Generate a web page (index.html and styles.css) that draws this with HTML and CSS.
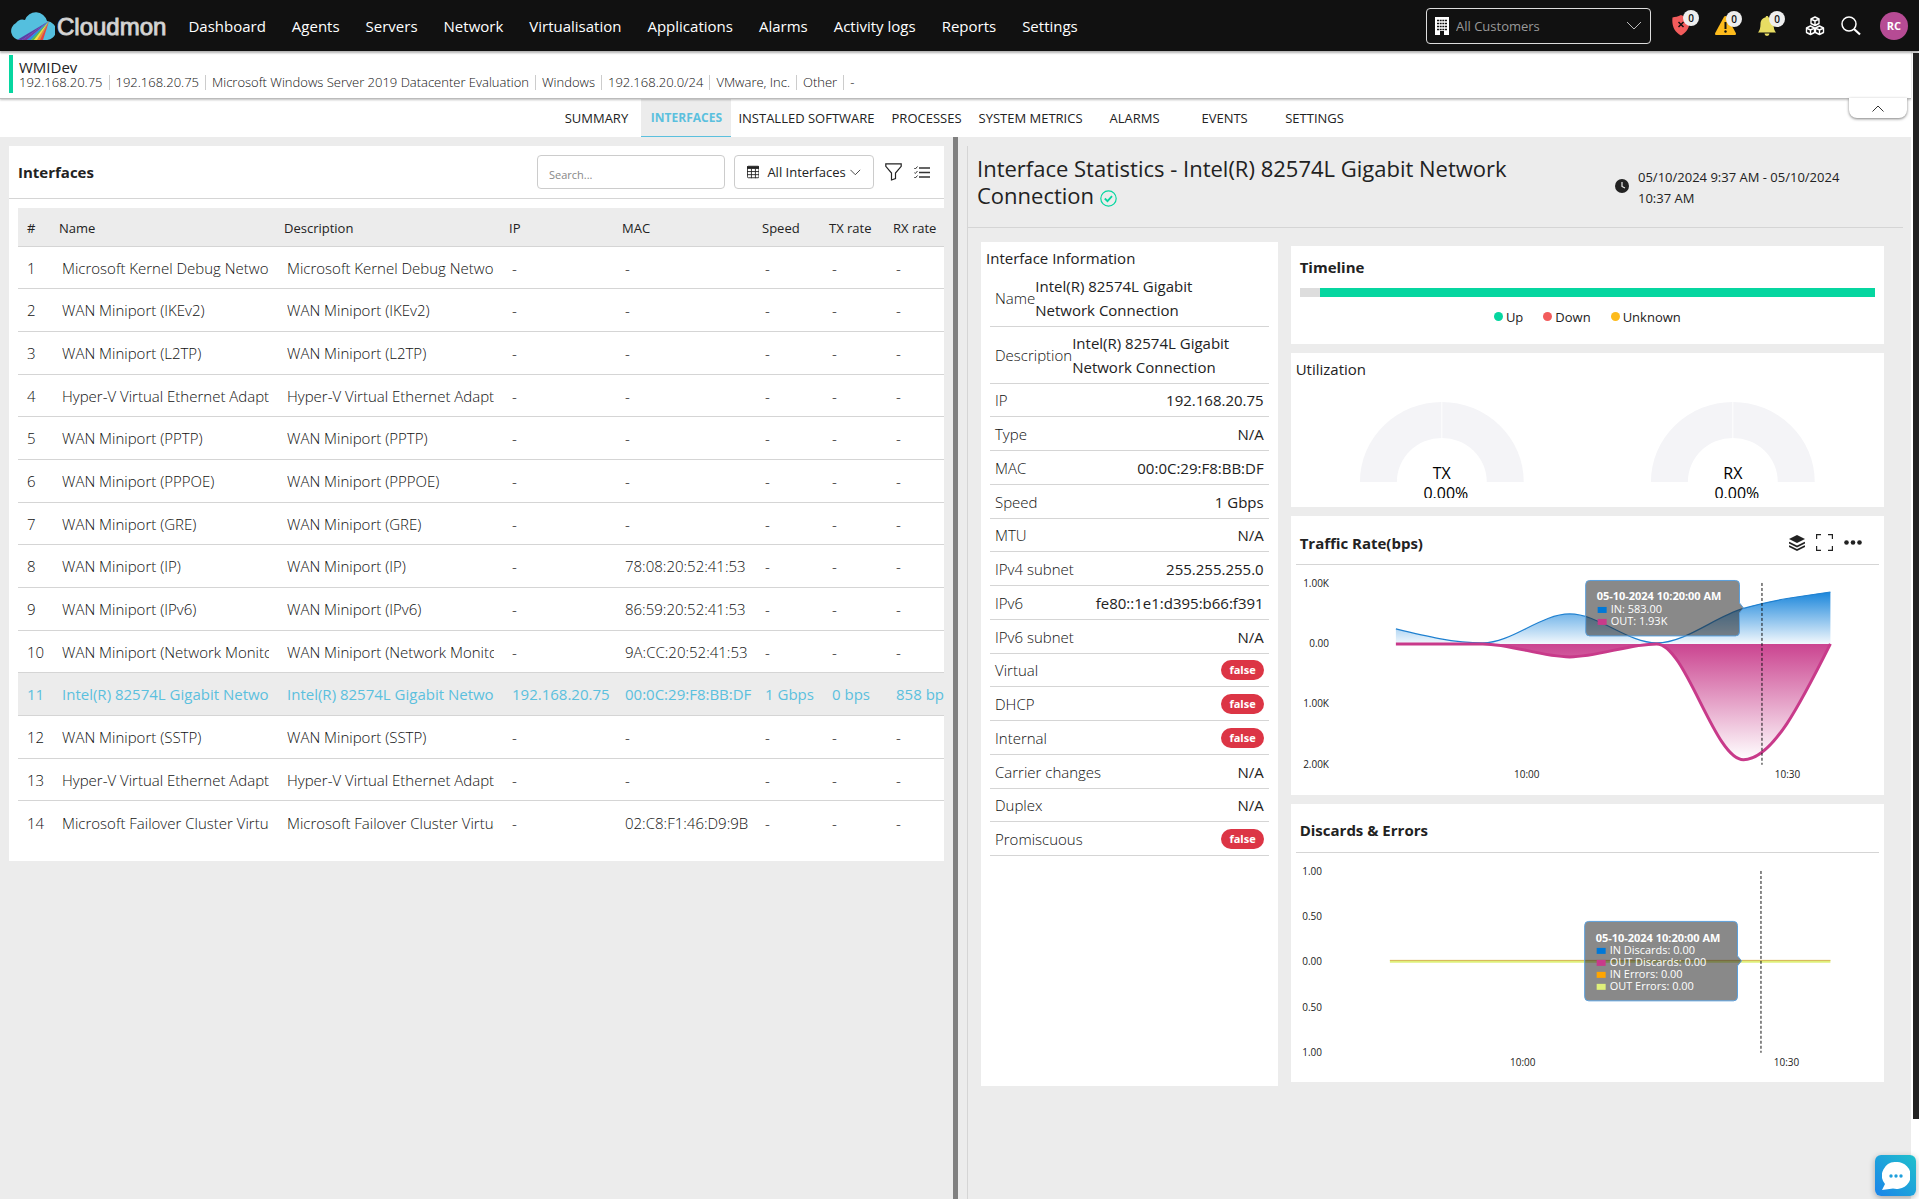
FILE: index.html
```html
<!DOCTYPE html>
<html lang="en">
<head>
<meta charset="UTF-8">
<meta name="viewport" content="width=device-width, initial-scale=1.0">
<title>Cloudmon - WMIDev</title>
<link rel="stylesheet" href="styles.css">
</head>
<body>

<header class="navbar">
    <a class="brand" href="#">
        <svg width="44" height="28" viewBox="0 0 44 28">
            <defs><clipPath id="cloud"><path d="M9 28a9 9 0 0 1-4-17 8 8 0 0 1 9-3A11.500 11.500 0 0 1 36 9a9.500 9.500 0 0 1-1 19z"/></clipPath></defs>
            <g clip-path="url(#cloud)">
                <rect width="44" height="28" fill="#54bfde"/>
                <path d="M38 9L6 28h5z" fill="#5b3fa8"/>
                <path d="M38 9L11 28h5z" fill="#7a3aa5"/>
                <path d="M38 9L16 28h4z" fill="#2d8fe0"/>
                <path d="M38 9L20 28h3z" fill="#5fb947"/>
                <path d="M38 9L23 28h3z" fill="#f7e23a"/>
                <path d="M38 9L26 28h3z" fill="#f58a2c"/>
                <path d="M38 9L29 28h3z" fill="#e8443c"/>
            </g>
        </svg>
        <span>Cloudmon</span>
    </a>
    <nav class="main-nav">
        <a href="#">Dashboard</a>
        <a href="#">Agents</a>
        <a href="#">Servers</a>
        <a href="#">Network</a>
        <a href="#">Virtualisation</a>
        <a href="#">Applications</a>
        <a href="#">Alarms</a>
        <a href="#">Activity logs</a>
        <a href="#">Reports</a>
        <a href="#">Settings</a>
    </nav>
    <div class="nav-right">
        <label class="customer">
            <svg width="14" height="18" viewBox="0 0 14 18"><path d="M0 0h14v18H9v-4H5v4H0z" fill="#fff"/><path d="M2 3.500h10M2 6.500h10M2 9.500h10M2 12.500h10" stroke="#111" stroke-width="1.500" stroke-dasharray="2 .67"/></svg>
            <select aria-label="Customer"><option>All Customers</option></select>
            <svg class="chevron" width="16" height="9" viewBox="0 0 16 9"><path d="M1 1l7 7 7-7" fill="none" stroke="#bbb"/></svg>
        </label>
        <button class="alert" aria-label="Critical">
            <svg width="18" height="21" viewBox="0 0 18 21"><path d="M9 0c3 1.500 6 2 8.500 2.500C18.500 11 15.500 17 9 20.500 2.500 17 -.5 11 .5 2.500 3 2 6 1.500 9 0z" fill="#f25c5c"/><path d="M6.500 7l5 5m0-5l-5 5" stroke="#111" stroke-width="1.500"/></svg>
            <span class="badge">0</span>
        </button>
        <button class="alert" aria-label="Warnings">
            <svg width="21" height="19" viewBox="0 0 21 19"><path d="M10.500 0c.7 0 1.200.4 1.600 1l8.700 16c.4 1 0 2-1 2H1.200c-1 0-1.400-1-1-2L8.900 1c.4-.6.9-1 1.600-1z" fill="#fdbb1c"/><path d="M10.500 6v7" stroke="#111" stroke-width="2"/><circle cx="10.500" cy="15.500" r="1.200" fill="#111"/></svg>
            <span class="badge">0</span>
        </button>
        <button class="alert" aria-label="Notifications">
            <svg width="18" height="20" viewBox="0 0 18 20"><path d="M9 0c.8 0 1.300.5 1.300 1.200C14 2 15.500 5 15.500 8c0 4 1 7 2.500 8.500H0C1.500 15 2.500 12 2.500 8c0-3 1.500-6 5.200-6.800C7.700.5 8.200 0 9 0zM6.500 17.500h5a2.500 2.500 0 0 1-5 0z" fill="#e8dd63"/></svg>
            <span class="badge">0</span>
        </button>
        <button class="nav-icon" aria-label="Modules">
            <svg width="20" height="20" viewBox="0 0 20 20" fill="none" stroke="#fff" stroke-width="1.400" stroke-linejoin="round"><path d="M10 1l4 2v4.500l-4 2-4-2V3zM6 3l4 2 4-2M10 5v4.500"/><path d="M5.500 10l4 2v4.500l-4 2-4-2V12zM1.500 12l4 2 4-2M5.500 14v4.500M14.500 10l4 2v4.500l-4 2-4-2V12zM10.500 12l4 2 4-2M14.500 14v4.500"/></svg>
        </button>
        <button class="nav-icon" aria-label="Search">
            <svg width="20" height="20" viewBox="0 0 20 20" fill="none" stroke="#fff"><circle cx="8" cy="8" r="7" stroke-width="1.500"/><path d="M13 13l6 5.500" stroke-width="2.200"/></svg>
        </button>
        <button class="avatar">RC</button>
    </div>
</header>

<div class="page">
    <div class="content">
        <section class="device">
            <h1>WMIDev</h1>
            <ul>
                <li>192.168.20.75</li>
                <li>192.168.20.75</li>
                <li>Microsoft Windows Server 2019 Datacenter Evaluation</li>
                <li>Windows</li>
                <li>192.168.20.0/24</li>
                <li>VMware, Inc.</li>
                <li>Other</li>
                <li>-</li>
            </ul>
            <button class="collapse" aria-label="Collapse"><svg width="12" height="7" viewBox="0 0 12 7"><path d="M.5 6.500L6 1l5.500 5.500" fill="none" stroke="#333"/></svg></button>
        </section>

        <nav class="tabs">
            <a href="#">SUMMARY</a>
            <a href="#" class="active">INTERFACES</a>
            <a href="#">INSTALLED SOFTWARE</a>
            <a href="#">PROCESSES</a>
            <a href="#">SYSTEM METRICS</a>
            <a href="#">ALARMS</a>
            <a href="#">EVENTS</a>
            <a href="#">SETTINGS</a>
        </nav>

        <main class="split">
            <section class="list-pane">
                <div class="list-card">
                    <div class="toolbar">
                        <h2>Interfaces</h2>
                        <input type="text" placeholder="Search..." aria-label="Search">
                        <label class="view-select">
                            <svg width="14" height="14" viewBox="0 0 14 14" fill="none" stroke="#222"><rect x=".5" y=".5" width="13" height="13" rx="1"/><path d="M0 2h14" stroke-width="3"/><path d="M0 6.500h14M0 10h14M5 3v11M9.500 3v11"/></svg>
                            <select aria-label="View"><option>All Interfaces</option></select>
                            <svg class="chevron" width="12" height="7" viewBox="0 0 12 7"><path d="M.5.5L6 6 11.500.5" fill="none" stroke="#333"/></svg>
                        </label>
                        <button class="tool" aria-label="Filter"><svg width="17" height="18" viewBox="0 0 17 18"><path d="M.8.800h15.400v2.500L10.500 10v5.500L6.500 17v-7L.8 3.300z" fill="none" stroke="#222" stroke-width="1.200"/></svg></button>
                        <button class="tool" aria-label="Columns"><svg width="16" height="13" viewBox="0 0 16 13" fill="none" stroke="#333" stroke-width="1.300"><path d="M5 2h11M5 6.500h11M5 11h11"/><path d="M.3 2l1 1L3.500.500M.3 6.500l1 1 2.200-2.500M.3 11l1 1 2.200-2.500" stroke-width="1"/></svg></button>
                    </div>
                    <div class="table-wrap">
                        <table>
                            <colgroup><col class="c-num"><col class="c-name"><col class="c-name"><col class="c-ip"><col class="c-mac"><col class="c-speed"><col class="c-tx"><col class="c-rx"></colgroup>
                            <thead>
                                <tr><th>#</th><th>Name</th><th>Description</th><th>IP</th><th>MAC</th><th>Speed</th><th>TX rate</th><th>RX rate</th></tr>
                            </thead>
                            <tbody>
                                <tr><td>1</td><td><div>Microsoft Kernel Debug Network</div></td><td><div>Microsoft Kernel Debug Network</div></td><td>-</td><td>-</td><td>-</td><td>-</td><td>-</td></tr>
                                <tr><td>2</td><td><div>WAN Miniport (IKEv2)</div></td><td><div>WAN Miniport (IKEv2)</div></td><td>-</td><td>-</td><td>-</td><td>-</td><td>-</td></tr>
                                <tr><td>3</td><td><div>WAN Miniport (L2TP)</div></td><td><div>WAN Miniport (L2TP)</div></td><td>-</td><td>-</td><td>-</td><td>-</td><td>-</td></tr>
                                <tr><td>4</td><td><div>Hyper-V Virtual Ethernet Adapter</div></td><td><div>Hyper-V Virtual Ethernet Adapter</div></td><td>-</td><td>-</td><td>-</td><td>-</td><td>-</td></tr>
                                <tr><td>5</td><td><div>WAN Miniport (PPTP)</div></td><td><div>WAN Miniport (PPTP)</div></td><td>-</td><td>-</td><td>-</td><td>-</td><td>-</td></tr>
                                <tr><td>6</td><td><div>WAN Miniport (PPPOE)</div></td><td><div>WAN Miniport (PPPOE)</div></td><td>-</td><td>-</td><td>-</td><td>-</td><td>-</td></tr>
                                <tr><td>7</td><td><div>WAN Miniport (GRE)</div></td><td><div>WAN Miniport (GRE)</div></td><td>-</td><td>-</td><td>-</td><td>-</td><td>-</td></tr>
                                <tr><td>8</td><td><div>WAN Miniport (IP)</div></td><td><div>WAN Miniport (IP)</div></td><td>-</td><td>78:08:20:52:41:53</td><td>-</td><td>-</td><td>-</td></tr>
                                <tr><td>9</td><td><div>WAN Miniport (IPv6)</div></td><td><div>WAN Miniport (IPv6)</div></td><td>-</td><td>86:59:20:52:41:53</td><td>-</td><td>-</td><td>-</td></tr>
                                <tr><td>10</td><td><div>WAN Miniport (Network Monitor)</div></td><td><div>WAN Miniport (Network Monitor)</div></td><td>-</td><td>9A:CC:20:52:41:53</td><td>-</td><td>-</td><td>-</td></tr>
                                <tr class="selected"><td>11</td><td><div>Intel(R) 82574L Gigabit Network</div></td><td><div>Intel(R) 82574L Gigabit Network</div></td><td>192.168.20.75</td><td>00:0C:29:F8:BB:DF</td><td>1 Gbps</td><td>0 bps</td><td>858 bps</td></tr>
                                <tr><td>12</td><td><div>WAN Miniport (SSTP)</div></td><td><div>WAN Miniport (SSTP)</div></td><td>-</td><td>-</td><td>-</td><td>-</td><td>-</td></tr>
                                <tr><td>13</td><td><div>Hyper-V Virtual Ethernet Adapter</div></td><td><div>Hyper-V Virtual Ethernet Adapter</div></td><td>-</td><td>-</td><td>-</td><td>-</td><td>-</td></tr>
                                <tr><td>14</td><td><div>Microsoft Failover Cluster Virtual</div></td><td><div>Microsoft Failover Cluster Virtual</div></td><td>-</td><td>02:C8:F1:46:D9:9B</td><td>-</td><td>-</td><td>-</td></tr>
                            </tbody>
                        </table>
                    </div>
                </div>
            </section>

            <div class="splitter"></div>

            <section class="detail-pane">
                <div class="detail-header">
                    <h2>Interface Statistics - Intel(R) 82574L Gigabit Network Connection <svg width="17" height="17" viewBox="0 0 17 17" fill="none" stroke="#06d6a0"><circle cx="8.500" cy="8.500" r="7.700" stroke-width="1.200"/><path d="M4.800 8.500l2.700 2.700 4.500-5" stroke-width="1.800"/></svg></h2>
                    <div class="period">
                        <svg width="14" height="14" viewBox="0 0 14 14"><circle cx="7" cy="7" r="7" fill="#222"/><path d="M7 3v4.500l3 1.500" fill="none" stroke="#ececec" stroke-width="1.200"/></svg>
                        <span>05/10/2024 9:37 AM - 05/10/2024 10:37 AM</span>
                    </div>
                </div>
                <div class="detail-body">
                    <div class="info-card">
                        <h3>Interface Information</h3>
                        <dl>
                            <div><dt>Name</dt><dd class="long">Intel(R) 82574L Gigabit<br>Network Connection</dd></div>
                            <div><dt>Description</dt><dd class="long">Intel(R) 82574L Gigabit<br>Network Connection</dd></div>
                            <div><dt>IP</dt><dd>192.168.20.75</dd></div>
                            <div><dt>Type</dt><dd>N/A</dd></div>
                            <div><dt>MAC</dt><dd>00:0C:29:F8:BB:DF</dd></div>
                            <div><dt>Speed</dt><dd>1 Gbps</dd></div>
                            <div><dt>MTU</dt><dd>N/A</dd></div>
                            <div><dt>IPv4 subnet</dt><dd>255.255.255.0</dd></div>
                            <div><dt>IPv6</dt><dd>fe80::1e1:d395:b66:f391</dd></div>
                            <div><dt>IPv6 subnet</dt><dd>N/A</dd></div>
                            <div><dt>Virtual</dt><dd class="pill">false</dd></div>
                            <div><dt>DHCP</dt><dd class="pill">false</dd></div>
                            <div><dt>Internal</dt><dd class="pill">false</dd></div>
                            <div><dt>Carrier changes</dt><dd>N/A</dd></div>
                            <div><dt>Duplex</dt><dd>N/A</dd></div>
                            <div><dt>Promiscuous</dt><dd class="pill">false</dd></div>
                        </dl>
                    </div>

                    <div class="charts">
                        <div class="card timeline">
                            <h3>Timeline</h3>
                            <div class="bar"><span></span></div>
                            <ul class="legend">
                                <li class="up">Up</li>
                                <li class="down">Down</li>
                                <li class="unknown">Unknown</li>
                            </ul>
                        </div>

                        <div class="card utilization">
                            <h3>Utilization</h3>
                            <div class="gauges">
                                <svg viewBox="0 0 292 119">
                                    <path d="M64 103a82 80 0 0 1 164 0h-37a45 44 0 0 0-90 0z" fill="#f4f4f7"/>
                                    <path d="M146 23v36" stroke="#fff"/>
                                    <text x="146" y="100" text-anchor="middle">TX</text>
                                    <text x="150" y="120" text-anchor="middle">0.00%</text>
                                </svg>
                                <svg viewBox="0 0 292 119">
                                    <path d="M64 103a82 80 0 0 1 164 0h-37a45 44 0 0 0-90 0z" fill="#f4f4f7"/>
                                    <path d="M146 23v36" stroke="#fff"/>
                                    <text x="146" y="100" text-anchor="middle">RX</text>
                                    <text x="150" y="120" text-anchor="middle">0.00%</text>
                                </svg>
                            </div>
                        </div>

                        <div class="card chart">
                            <div class="chart-head">
                                <h3>Traffic Rate(bps)</h3>
                                <button aria-label="Layers"><svg width="16" height="16" viewBox="0 0 16 16"><path d="M8 0l8 4-8 4-8-4z" fill="#222"/><path d="M0 7.500l8 4 8-4M0 11l8 4 8-4" fill="none" stroke="#222" stroke-width="1.600"/></svg></button>
                                <button aria-label="Full screen"><svg width="17" height="17" viewBox="0 0 17 17"><path d="M.6 5V.600H5M12 .600h4.400V5M16.400 12v4.400H12M5 16.400H.6V12" fill="none" stroke="#222" stroke-width="1.200"/></svg></button>
                                <button aria-label="More"><svg width="18" height="5" viewBox="0 0 18 5" fill="#222"><circle cx="2.500" cy="2.500" r="2.300"/><circle cx="9" cy="2.500" r="2.300"/><circle cx="15.500" cy="2.500" r="2.300"/></svg></button>
                            </div>
                            <svg class="plot" viewBox="0 0 584 230">
                                <defs>
                                    <linearGradient id="inFill" x1="0" y1="0" x2="0" y2="1"><stop offset="0" stop-color="#0078d7" stop-opacity=".9"/><stop offset="1" stop-color="#0078d7" stop-opacity=".05"/></linearGradient>
                                    <linearGradient id="outFill" x1="0" y1="0" x2="0" y2="1"><stop offset="0" stop-color="#c83a8a" stop-opacity=".95"/><stop offset="1" stop-color="#c83a8a" stop-opacity="0"/></linearGradient>
                                </defs>
                                <g text-anchor="end">
                                    <text x="33" y="22">1.00K</text><text x="33" y="82">0.00</text><text x="33" y="142">1.00K</text><text x="33" y="203">2.00K</text>
                                </g>
                                <g text-anchor="middle"><text x="231" y="213">10:00</text><text x="492" y="213">10:30</text></g>
                                <path d="M100 64C129 71 158 78 187 78S245 49 274 49 332 78 361 78 419 52 448 43.500 506 31 535 27V79H100z" fill="url(#inFill)"/>
                                <path d="M100 64C129 71 158 78 187 78S245 49 274 49 332 78 361 78 419 52 448 43.500 506 31 535 27" fill="none" stroke="#1f80d0" stroke-width="1.200"/>
                                <path d="M100 79H187C216 79 245 92 274 92S332 79 361 79 419 195 448 195 506 137 535 79z" fill="url(#outFill)"/>
                                <path d="M100 79H187C216 79 245 92 274 92S332 79 361 79 419 195 448 195 506 137 535 79" fill="none" stroke="#c83a8a" stroke-width="3"/>
                                <path d="M466.500 18v182" stroke="#111" stroke-dasharray="3 2"/>
                                <path class="tip" d="M294 15.500h146a4 4 0 0 1 4 4V38l4 5-4 5v19a4 4 0 0 1-4 4H294a4 4 0 0 1-4-4V19.500a4 4 0 0 1 4-4z"/>
                                <g class="tip-text">
                                    <text class="bold" x="301" y="35">05-10-2024 10:20:00 AM</text>
                                    <rect x="302" y="42" width="9" height="6" fill="#0078d7"/><text x="315" y="48">IN: 583.00</text>
                                    <rect x="302" y="54" width="9" height="6" fill="#c83a8a"/><text x="315" y="60">OUT: 1.93K</text>
                                </g>
                            </svg>
                        </div>

                        <div class="card chart">
                            <div class="chart-head">
                                <h3>Discards &amp; Errors</h3>
                            </div>
                            <svg class="plot" viewBox="0 0 584 230">
                                <g text-anchor="end">
                                    <text x="26" y="22">1.00</text><text x="26" y="67">0.50</text><text x="26" y="112">0.00</text><text x="26" y="158">0.50</text><text x="26" y="203">1.00</text>
                                </g>
                                <g text-anchor="middle"><text x="227" y="213">10:00</text><text x="491" y="213">10:30</text></g>
                                <path d="M94 108.500h441" stroke="#dff07a" stroke-width="3"/>
                                <path d="M94 107.500h441" stroke="#d9b45a"/>
                                <path d="M465.500 18v182" stroke="#111" stroke-dasharray="3 2"/>
                                <path class="tip" d="M293 68.500h145a4 4 0 0 1 4 4V103l4 5-4 5v31a4 4 0 0 1-4 4H293a4 4 0 0 1-4-4V72.500a4 4 0 0 1 4-4z"/>
                                <g class="tip-text">
                                    <text class="bold" x="300" y="89">05-10-2024 10:20:00 AM</text>
                                    <rect x="301" y="95" width="9" height="6" fill="#0078d7"/><text x="314" y="101">IN Discards: 0.00</text>
                                    <rect x="301" y="107" width="9" height="6" fill="#c83a8a"/><text x="314" y="113">OUT Discards: 0.00</text>
                                    <rect x="301" y="119" width="9" height="6" fill="#ffa500"/><text x="314" y="125">IN Errors: 0.00</text>
                                    <rect x="301" y="131" width="9" height="6" fill="#dff07a"/><text x="314" y="137">OUT Errors: 0.00</text>
                                </g>
                            </svg>
                        </div>
                    </div>
                </div>
            </section>
        </main>
    </div>
    <div class="scroll-track"><div class="scroll-thumb"></div></div>
</div>

<button class="chat" aria-label="Chat">
    <svg width="28" height="28" viewBox="0 0 28 28"><path d="M14 0a14 13.500 0 1 1-3 26.500L0 28l3-6A13.500 13.500 0 0 1 14 0z" fill="#fff"/><g fill="#1f9fdc"><circle cx="9" cy="14" r="1.700"/><circle cx="14" cy="14" r="1.700"/><circle cx="19" cy="14" r="1.700"/></g></svg>
</button>

</body>
</html>
```
FILE: styles.css
```css
* {
    box-sizing: border-box;
}

body {
    font-family: "Open Sans", "Noto Sans", sans-serif;
    font-size: 15px;
    color: #222;
    background-color: #fff;
    margin: 0;
    height: 100vh;
    display: flex;
    flex-direction: column;
    overflow: hidden;
}

h1, h2, h3, ul, dl, dd {
    margin: 0;
    padding: 0;
}

ul {
    list-style: none;
}

a {
    color: inherit;
    text-decoration: none;
}

button {
    background: none;
    border: none;
    padding: 0;
    font-family: inherit;
    display: flex;
    align-items: center;
    justify-content: center;
    cursor: pointer;
}

select {
    appearance: none;
    background: transparent;
    border: none;
    font-family: inherit;
    padding: 0;
    flex: 1;
}

/* Top bar */
.navbar {
    height: 51px;
    background-color: #111;
    display: flex;
    align-items: center;
    padding: 0 11px;
    box-shadow: 0 2px 2px rgba(0, 0, 0, 0.3);
    position: relative;
    z-index: 2;
}

.brand {
    display: flex;
    align-items: center;
    gap: 2px;
    font-family: "Liberation Sans", Arial, sans-serif;
    font-size: 24px;
    color: #ddd;
}

.brand span {
    padding-top: 3px;
    -webkit-text-stroke: 1px #ccc;
}

.main-nav {
    display: flex;
    gap: 26px;
    margin-left: 22px;
    font-size: 15px;
    color: #fff;
}

.nav-right {
    margin-left: auto;
    display: flex;
    align-items: center;
}

.customer {
    width: 225px;
    height: 36px;
    border: 1px solid #ddd;
    border-radius: 4px;
    display: flex;
    align-items: center;
    gap: 7px;
    padding: 0 8px;
    margin-right: 21px;
}

.customer select {
    color: #999;
    font-size: 13px;
}

.alert {
    width: 43px;
    position: relative;
    justify-content: flex-start;
}

.badge {
    position: absolute;
    top: -5px;
    left: 11px;
    width: 16px;
    height: 16px;
    border-radius: 8px;
    background-color: #eee;
    color: #111;
    font-size: 10px;
    font-weight: 600;
    line-height: 16px;
}

.nav-icon {
    width: 36px;
    justify-content: flex-start;
}

.alert + .nav-icon {
    margin-left: 4px;
}

.avatar {
    width: 28px;
    height: 28px;
    margin-left: 3px;
    border-radius: 14px;
    background-color: #b64b94;
    color: #fff;
    font-size: 11px;
    font-weight: 700;
}

/* Page with its scrollbar */
.page {
    flex: 1;
    display: flex;
    min-height: 0;
}

.content {
    flex: 1;
    display: flex;
    flex-direction: column;
    min-width: 0;
}

.scroll-track {
    width: 8px;
    padding: 2px 0 0 2px;
}

.scroll-thumb {
    height: 93%;
    background-color: #222;
}

.device {
    height: 48px;
    padding: 8px 0 0 13px;
    border-bottom: 1px solid #bbb;
    box-shadow: 0 1px 2px rgba(0, 0, 0, 0.25);
    position: relative;
    z-index: 1;
}

.device::before {
    content: "";
    position: absolute;
    left: 9px;
    top: 4px;
    width: 4px;
    height: 38px;
    background-color: #06d6a0;
}

.device h1 {
    font-size: 15px;
    font-weight: 500;
    line-height: 16px;
    padding-left: 6px;
}

.device ul {
    display: flex;
    color: #111;
    font-size: 13px;
    font-weight: 300;
    line-height: 15px;
}

.device li {
    padding: 0 6px;
    border-right: 1px solid #ccc;
}

.device li:last-child {
    border-right: none;
}

.collapse {
    position: absolute;
    right: 4px;
    top: 47px;
    width: 58px;
    height: 20px;
    background-color: #fff;
    border-radius: 0 0 8px 8px;
    box-shadow: 0 1px 3px rgba(0, 0, 0, 0.5);
}

.tabs {
    display: flex;
    justify-content: center;
    background-color: #fff;
    font-size: 13px;
}

.tabs a {
    min-width: 90px;
    padding: 0 7px;
    height: 39px;
    line-height: 38px;
    text-align: center;
    margin-bottom: -1px;
}

.tabs .active {
    background-color: #ececec;
    color: #5bc0de;
    font-size: 12px;
    font-weight: 700;
    border-bottom: 2px solid #5bc0de;
}

.split {
    flex: 1;
    display: grid;
    grid-template-columns: minmax(0, 1fr) 5px minmax(0, 1fr);
    background-color: #ececec;
    min-height: 0;
}

.splitter {
    background-color: #808080;
}

/* Interface list */
.list-pane {
    padding: 9px;
}

.list-card {
    background-color: #fff;
    padding-bottom: 17px;
}

.toolbar {
    height: 53px;
    display: flex;
    align-items: center;
    padding: 0 14px 0 9px;
    border-bottom: 1px solid #d5d5d5;
}

.toolbar h2 {
    font-size: 15px;
    font-weight: 700;
    margin-right: auto;
}

.toolbar input {
    width: 188px;
    height: 34px;
    border: 1px solid #ccc;
    border-radius: 4px;
    padding: 4px 11px 0;
    font-family: inherit;
    font-size: 11px;
}

.toolbar input::placeholder {
    color: #888;
}

.view-select {
    width: 140px;
    height: 34px;
    margin: 0 11px 0 9px;
    border: 1px solid #ccc;
    border-radius: 4px;
    display: flex;
    align-items: center;
    gap: 8px;
    padding: 0 12px;
}

.view-select select {
    font-size: 13px;
    color: #222;
}

.view-select .chevron {
    margin-left: -4px;
}

.tool + .tool {
    margin-left: 12px;
}

.table-wrap {
    margin: 9px 0 0 9px;
    overflow: hidden;
}

table {
    width: 100%;
    table-layout: fixed;
    border-collapse: separate;
    border-spacing: 0;
}

.c-num { width: 32px; }
.c-name { width: 225px; }
.c-ip { width: 113px; }
.c-mac { width: 140px; }
.c-speed { width: 67px; }
.c-tx { width: 64px; }

th {
    height: 39px;
    padding: 2px 0 0 9px;
    background-color: #ececec;
    border-bottom: 1px solid #d5d5d5;
    text-align: left;
    font-size: 13px;
    font-weight: 500;
    white-space: nowrap;
}

td {
    height: 43px;
    padding: 0 0 0 12px;
    border-bottom: 1px solid #d5d5d5;
    color: #111;
    font-weight: 300;
    white-space: nowrap;
}

tr:nth-child(3n+1) td {
    height: 42px;
}

td:first-child {
    padding-left: 9px;
}

td div {
    overflow: hidden;
    margin-right: 6px;
}

tbody tr:last-child td {
    border-bottom: none;
}

.selected td {
    background-color: #ececec;
    color: #5bc0de;
    font-weight: 400;
}

/* Interface details */
.detail-pane {
    margin: 9px 8px 0 9px;
    border-left: 1px solid #d5d5d5;
}

.detail-header {
    height: 82px;
    display: flex;
    justify-content: space-between;
    padding: 9px 47px 0 9px;
    border-bottom: 1px solid #d5d5d5;
}

.detail-header h2 {
    width: 560px;
    font-size: 22px;
    font-weight: 500;
    line-height: 27px;
}

.detail-header h2 svg {
    vertical-align: -3px;
}

.period {
    width: 241px;
    display: flex;
    gap: 9px;
    padding-top: 12px;
    font-size: 13px;
    line-height: 21px;
}

.period svg {
    flex: none;
    margin-top: 12px;
}

.detail-body {
    display: grid;
    grid-template-columns: minmax(0, 1fr) minmax(0, 2fr);
    gap: 13px;
    padding: 14px 19px 0 13px;
}

.info-card {
    background-color: #fff;
}

.info-card h3 {
    padding: 6px 5px 1px;
    font-size: 15px;
    font-weight: 500;
    line-height: 21px;
}

.info-card dl {
    margin: 0 9px;
}

.info-card dl div {
    min-height: 34px;
    padding: 4px 5px;
    border-bottom: 1px solid #d5d5d5;
    display: flex;
    align-items: center;
    justify-content: space-between;
    line-height: 24px;
}

.info-card dl div:nth-child(4n+3) {
    min-height: 33px;
}

.info-card dt {
    color: #111;
    font-weight: 300;
}

.info-card dd {
    font-weight: 500;
}

.info-card .long {
    flex: 1;
}

.info-card .pill {
    background-color: #dc3545;
    color: #fff;
    border-radius: 10px;
    padding: 0 8px;
    font-size: 11px;
    font-weight: 700;
    line-height: 20px;
}

.charts {
    display: flex;
    flex-direction: column;
    gap: 9px;
    padding: 4px 0;
}

.card {
    background-color: #fff;
}

.card h3 {
    font-size: 15px;
    font-weight: 700;
    line-height: 20px;
}

.timeline {
    height: 98px;
    padding: 11px 9px;
}

.bar {
    height: 9px;
    margin-top: 11px;
    padding-left: 20px;
    background-color: #ddd;
}

.bar span {
    display: block;
    height: 100%;
    background-color: #06d6a0;
}

.legend {
    display: flex;
    justify-content: center;
    gap: 20px;
    margin-top: 10px;
    font-size: 13px;
    line-height: 20px;
}

.legend li::before {
    content: "";
    display: inline-block;
    width: 9px;
    height: 9px;
    border-radius: 5px;
    margin-right: 3px;
    vertical-align: 1px;
}

.legend .up::before { background-color: #06d6a0; }
.legend .down::before { background-color: #f25c5c; }
.legend .unknown::before { background-color: #fdbb1c; }

.utilization {
    height: 154px;
    padding: 6px 5px;
}

.card.utilization h3 {
    font-weight: 500;
}

.gauges {
    display: flex;
}

.gauges svg {
    width: 50%;
    font-size: 16px;
}

.chart {
    padding: 0 5px;
}

.chart-head {
    height: 49px;
    padding: 5px 17px 0 4px;
    display: flex;
    align-items: center;
    gap: 11px;
    border-bottom: 1px solid #d5d5d5;
}

.chart-head h3 {
    margin-right: auto;
}

.plot {
    display: block;
    width: 100%;
    font-size: 10px;
    fill: #222;
}

.tip {
    fill: rgba(40, 40, 40, 0.55);
    stroke: #5aa0dc;
}

.tip-text {
    fill: #fff;
    font-size: 11px;
}

.bold {
    font-weight: 700;
}

.chat {
    position: fixed;
    right: 3px;
    bottom: 3px;
    width: 41px;
    height: 41px;
    border-radius: 6px;
    background: linear-gradient(45deg, #1c84ea, #20c0cc);
    box-shadow: 0 2px 6px rgba(0, 0, 0, 0.3);
    z-index: 3;
}
```
